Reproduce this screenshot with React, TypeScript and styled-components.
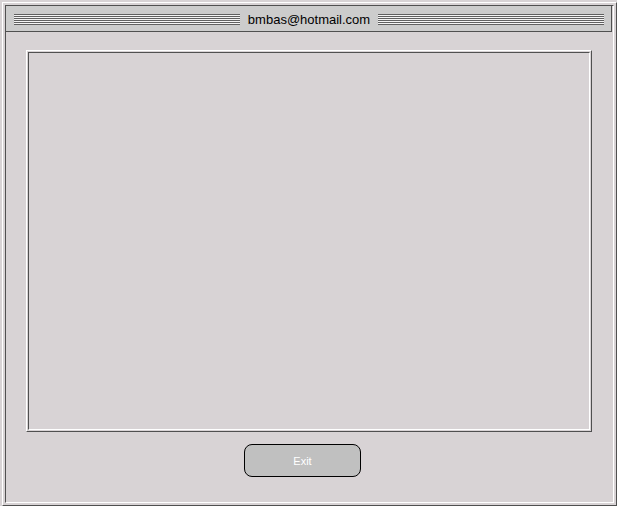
import React from "react";
import styled, { createGlobalStyle } from "styled-components";

const Global = createGlobalStyle`
  html, body { margin: 0; padding: 0; background: #d8d3d5; }
  * { box-sizing: border-box; }
`;

const Window = styled.div`
  width: 617px;
  height: 506px;
  background: #d8d3d5;
  padding: 2px 0 0 2px;
  font-family: "Liberation Sans", Arial, sans-serif;
`;

const Frame = styled.div`
  width: 615px;
  height: 504px;
  border-style: solid;
  border-width: 1px;
  border-color: #ffffff #505050 #505050 #ffffff;
  padding: 2px;
`;

const Inner = styled.div`
  height: 100%;
  border-style: solid;
  border-width: 1px;
  border-color: #505050 #ffffff #ffffff #505050;
  display: flex;
  flex-direction: column;
`;

const Header = styled.div`
  height: 26px;
  background: #cccccc;
  border-bottom: 1px solid #505050;
  border-right: 1px solid #505050;
  margin-right: 1px;
  display: flex;
  align-items: center;
  gap: 8px;
  padding: 1px 7px 0 8px;
`;

const Stripes = styled.div`
  flex: 1;
  height: 11px;
  background: repeating-linear-gradient(
    to bottom,
    #606060 0px,
    #606060 1px,
    #f4f4f4 1px,
    #f4f4f4 2px
  );
`;

const Title = styled.div`
  font-size: 13px;
  color: #000;
  white-space: nowrap;
`;

const Body = styled.div`
  flex: 1;
  display: flex;
  flex-direction: column;
  align-items: flex-start;
  padding: 18px 0 0 20px;
`;

const Panel = styled.div`
  width: 566px;
  height: 382px;
  border-style: solid;
  border-width: 1px;
  border-color: #ffffff #505050 #505050 #ffffff;
  padding: 1px;
`;

const PanelInner = styled.div`
  height: 100%;
  border-style: solid;
  border-width: 1px;
  border-color: #505050 #ffffff #ffffff #505050;
`;

const ExitButton = styled.button`
  margin: 12px 0 0 218px;
  width: 117px;
  height: 33px;
  background: #c0c0c0;
  border: 1px solid #000;
  border-radius: 8px;
  color: #ffffff;
  font-family: "Liberation Sans", Arial, sans-serif;
  font-size: 11px;
  padding: 0;
  cursor: pointer;
`;

export default function App() {
  return (
    <>
      <Global />
      <Window>
        <Frame>
          <Inner>
            <Header>
              <Stripes />
              <Title>bmbas@hotmail.com</Title>
              <Stripes />
            </Header>
            <Body>
              <Panel>
                <PanelInner />
              </Panel>
              <ExitButton>Exit</ExitButton>
            </Body>
          </Inner>
        </Frame>
      </Window>
    </>
  );
}
